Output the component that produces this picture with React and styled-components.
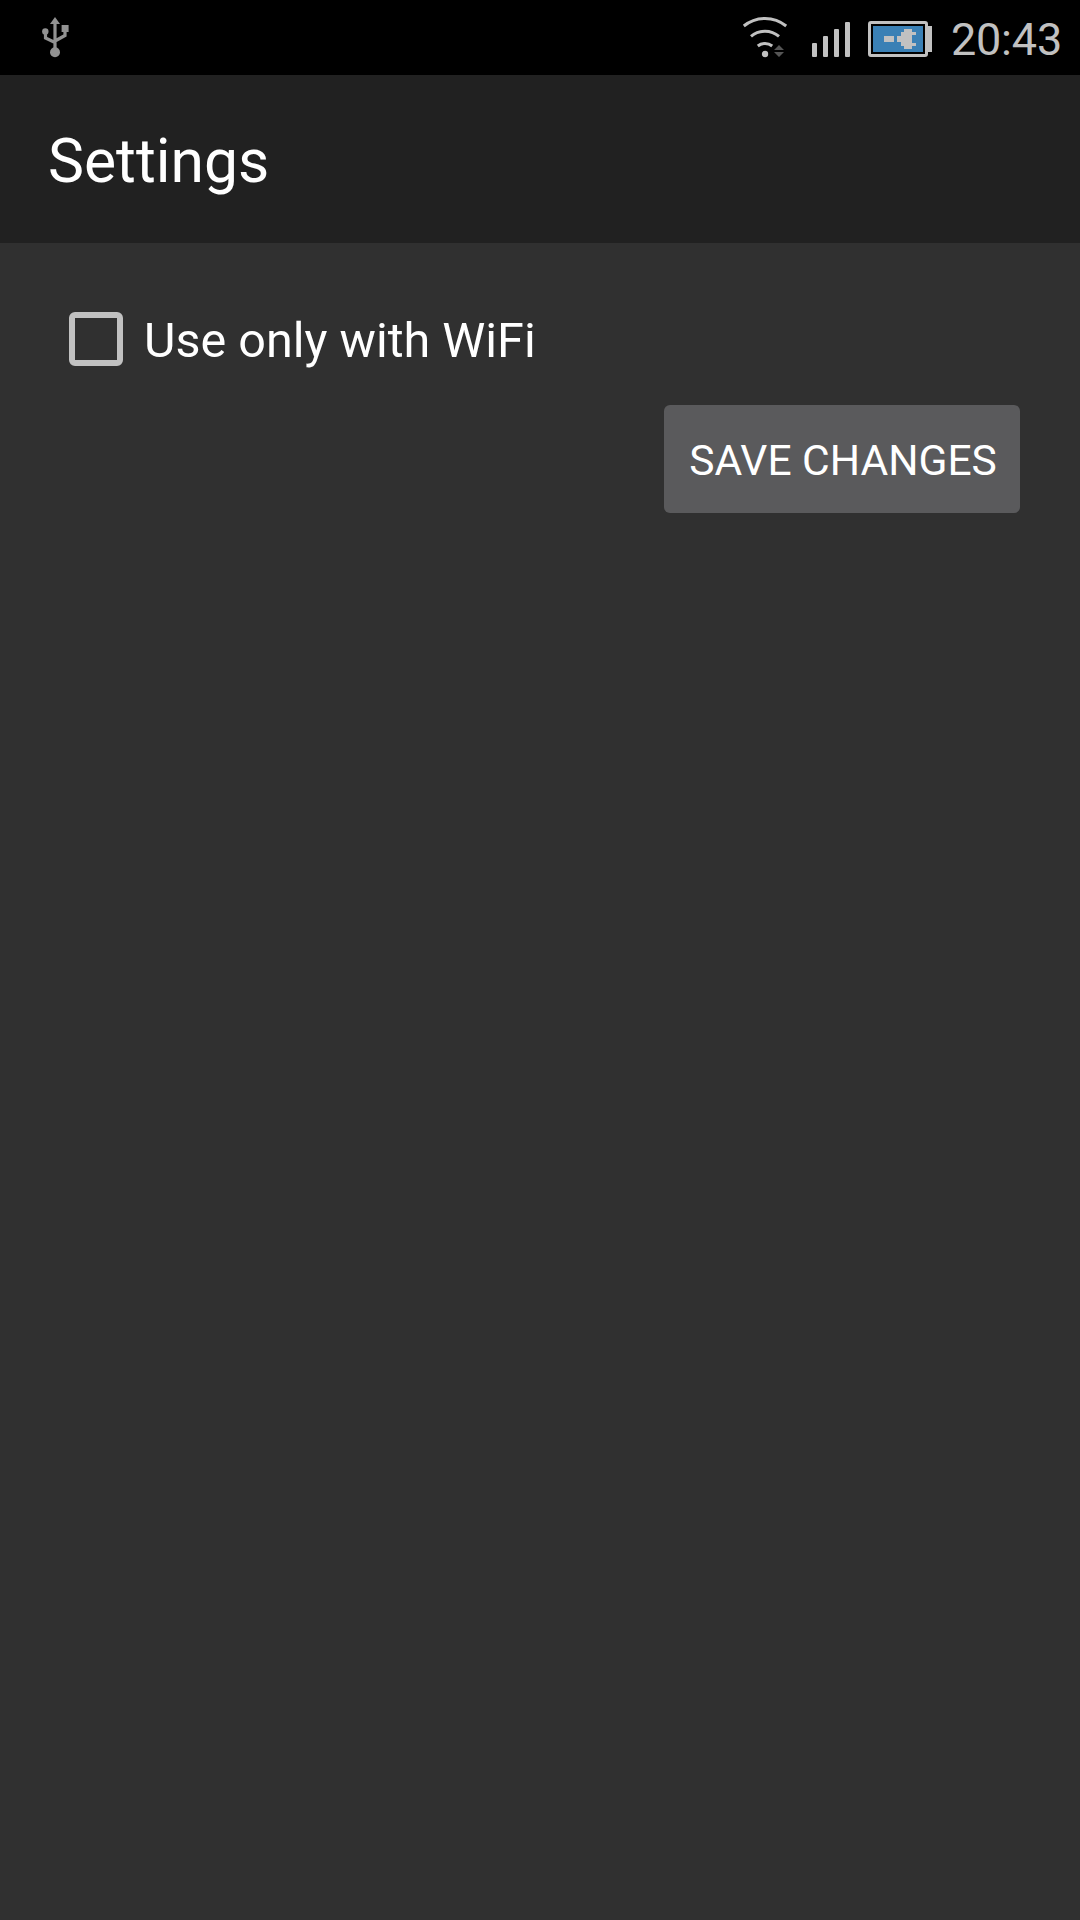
import React, { useState } from "react";
import styled, { createGlobalStyle } from "styled-components";

const GlobalStyle = createGlobalStyle`
  *, *::before, *::after { box-sizing: border-box; }
  body { margin: 0; background: #303030; }
`;

const Screen = styled.div`
  display: flex;
  flex-direction: column;
  min-height: 1920px;
  background: #303030;
  color: #fff;
  font-family: Roboto, "Noto Sans", sans-serif;
`;

const StatusBar = styled.header`
  display: flex;
  align-items: center;
  height: 75px;
  padding: 0 18px 0 40px;
  background: #000;
  color: #c1c1c1;
`;

const Icon = styled.svg`
  display: block;
  flex: none;
  margin-left: ${(p) => p.$gap || 0}px;
`;

const Clock = styled.time`
  margin-left: auto;
  font-size: 45px;
  line-height: 53px;
  letter-spacing: -0.2px;
  padding-top: 3px;
`;

const Tray = styled.div`
  display: flex;
  align-items: center;
  flex: 1;
  margin-left: 670px;
`;

const AppBar = styled.div`
  display: flex;
  align-items: center;
  height: 168px;
  padding: 5px 48px 0;
  background: #212121;
`;

const Title = styled.h1`
  margin: 0;
  font-size: 60.6px;
  font-weight: 400;
  line-height: 70px;
`;

const Content = styled.main`
  display: flex;
  flex-direction: column;
  padding: 48px 60px;
`;

const Option = styled.label`
  display: flex;
  align-items: center;
  height: 96px;
  padding-left: 9px;
  gap: 21px;
  cursor: pointer;
`;

const Checkbox = styled.input`
  appearance: none;
  width: 54px;
  height: 54px;
  margin: 0;
  border: 6px solid #c1c1c1;
  border-radius: 6px;
  &:checked { background: #80cbc4; }
`;

const OptionText = styled.span`
  padding-top: 4px;
  font-size: 48.5px;
  line-height: 56px;
`;

const Button = styled.button`
  align-self: flex-end;
  width: 356px;
  height: 108px;
  margin-top: 18px;
  padding: 4px 0 0 2px;
  border: 0;
  border-radius: 6px;
  background: #5a5a5c;
  color: #fff;
  font: 400 42.5px/50px Roboto, "Noto Sans", sans-serif;
  text-transform: uppercase;
  white-space: nowrap;
`;

function UsbIcon() {
  return (
    <Icon width="30" height="75" viewBox="40 0 30 75" fill="#929292">
      <path d="M55 17l5 7H50z" />
      <path d="M55 22v30M45.5 31v7L55 42.5M65 30v5.5L55 41" fill="none" stroke="#929292" strokeWidth="3.2" />
      <circle cx="55" cy="52.3" r="5" />
      <circle cx="45.3" cy="31.5" r="3.2" />
      <path d="M61.6 25h7v7h-7z" />
    </Icon>
  );
}

function WifiIcon() {
  return (
    <Icon width="48" height="75" viewBox="740 0 48 75" fill="#c1c1c1">
      <g fill="none" stroke="#c1c1c1" strokeWidth="3">
        <path d="M743.8 26Q753 18.4 765 18.4T786.2 26" />
        <path d="M751 36.4Q757 31.2 765 31.2T779 36.4" />
        <path d="M757.8 46Q761 43.4 765 43.4T772.2 46" />
      </g>
      <circle cx="765" cy="54" r="3.2" />
      <path d="M779 45l5 5h-10zM774 52h10l-5 5z" fill="#555" />
    </Icon>
  );
}

function SignalIcon() {
  return (
    <Icon $gap={24} width="38" height="75" viewBox="812 0 38 75" fill="#c1c1c1">
      <rect x="812" y="43" width="5" height="14" rx="1" />
      <rect x="823" y="36" width="5" height="21" rx="1" />
      <rect x="834" y="29" width="5" height="28" rx="1" />
      <rect x="845" y="22" width="5" height="35" rx="1" />
    </Icon>
  );
}

function BatteryIcon() {
  return (
    <Icon $gap={18} width="64" height="75" viewBox="868 0 64 75" fill="#c1c1c1">
      <rect x="869.5" y="22.5" width="57" height="33" rx="1.5" fill="none" stroke="#c1c1c1" strokeWidth="3" />
      <rect x="873" y="26" width="50" height="26" fill="#3a80b5" />
      <path d="M928 26h4v26h-4zM884 36h10v6h-10z" />
      <path d="M897 36h4v-4h3v-3h8v3h4v3h-4v8h4v3h-4v3h-8v-3h-3v-4h-4z" />
    </Icon>
  );
}

export default function App() {
  const [wifiOnly, setWifiOnly] = useState(false);
  return (
    <>
      <GlobalStyle />
      <Screen>
        <StatusBar>
          <UsbIcon />
          <Tray>
            <WifiIcon />
            <SignalIcon />
            <BatteryIcon />
            <Clock>20:43</Clock>
          </Tray>
        </StatusBar>
        <AppBar>
          <Title>Settings</Title>
        </AppBar>
        <Content>
          <Option>
            <Checkbox type="checkbox" checked={wifiOnly} onChange={(e) => setWifiOnly(e.target.checked)} />
            <OptionText>Use only with WiFi</OptionText>
          </Option>
          <Button type="button">Save changes</Button>
        </Content>
      </Screen>
    </>
  );
}
